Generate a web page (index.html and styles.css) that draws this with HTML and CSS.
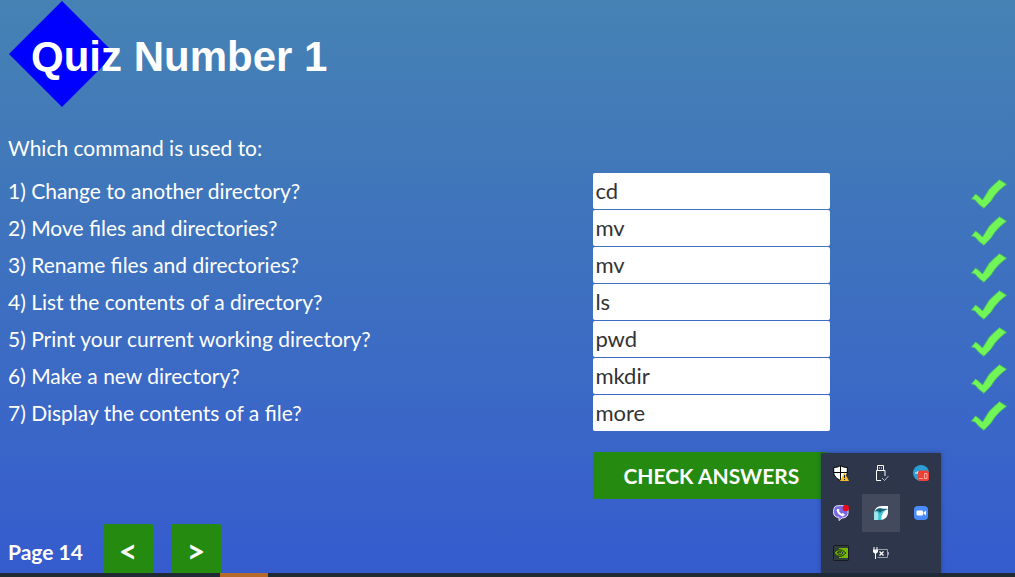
FILE: index.html
```html
<!DOCTYPE html>
<html lang="en">
<head>
<meta charset="utf-8">
<meta name="viewport" content="width=device-width, initial-scale=1">
<title>Quiz Number 1</title>
<link rel="stylesheet" href="styles.css">
</head>
<body>
<svg class="defs" aria-hidden="true">
  <symbol id="tick" viewBox="0 0 36 30">
    <path d="M.5 20 4.500 15 8 17.500 11.500 21 14 17 18 10.500 23 5.500 28.500 .7 35.500 5.200 28.500 11 24 16 20 22 13 29.300 8 25.500 4 21Z" fill="#72f557" stroke="#4bb968" stroke-width="1" stroke-linejoin="round"/>
  </symbol>
</svg>
<main class="page">
  <header class="header">
    <svg class="diamond" viewBox="0 0 106 106" aria-hidden="true"><path d="M53 0 106 53 53 106 0 53Z" fill="#0000ff"/></svg>
    <h1 class="title">Quiz Number 1</h1>
  </header>
  <form class="quiz">
    <p class="prompt">Which command is used to:</p>
    <div class="row"><label class="question" for="q1">1) Change to another directory?</label><input class="answer" id="q1" type="text" value="cd"><svg class="tick"><use href="#tick"/></svg></div>
    <div class="row"><label class="question" for="q2">2) Move files and directories?</label><input class="answer" id="q2" type="text" value="mv"><svg class="tick"><use href="#tick"/></svg></div>
    <div class="row"><label class="question" for="q3">3) Rename files and directories?</label><input class="answer" id="q3" type="text" value="mv"><svg class="tick"><use href="#tick"/></svg></div>
    <div class="row"><label class="question" for="q4">4) List the contents of a directory?</label><input class="answer" id="q4" type="text" value="ls"><svg class="tick"><use href="#tick"/></svg></div>
    <div class="row"><label class="question" for="q5">5) Print your current working directory?</label><input class="answer" id="q5" type="text" value="pwd"><svg class="tick"><use href="#tick"/></svg></div>
    <div class="row"><label class="question" for="q6">6) Make a new directory?</label><input class="answer" id="q6" type="text" value="mkdir"><svg class="tick"><use href="#tick"/></svg></div>
    <div class="row"><label class="question" for="q7">7) Display the contents of a file?</label><input class="answer" id="q7" type="text" value="more"><svg class="tick"><use href="#tick"/></svg></div>
    <div class="actions"><button class="button check" type="button">CHECK ANSWERS</button></div>
  </form>
  <nav class="pager">
    <span class="page-number">Page 14</span>
    <button class="button step" type="button">&lt;</button>
    <button class="button step" type="button">&gt;</button>
  </nav>
</main>
<footer class="taskbar"><span class="task"></span></footer>
<aside class="tray">
  <button class="tray-item" type="button" aria-label="Security">
    <svg viewBox="0 0 16 16"><path d="M7.500 .5C5.500 2 3 2.500 .7 2.500V7c0 4 3 6.500 6.800 8.500C11.300 13.500 14.300 11 14.300 7V2.500C12 2.500 9.500 2 7.500 .5Z" fill="#fff" stroke="#000"/><path d="M7.500 1V15M1 7.500H14" stroke="#000"/><path d="M11.500 7.500 16 16H7Z" fill="#f8b92c"/><path d="M11.500 10v3M11.500 14v1" stroke="#222" stroke-width="1"/></svg>
  </button>
  <button class="tray-item" type="button" aria-label="Eject device">
    <svg viewBox="0 0 16 16"><path d="M4.500 5V.5h6V5M8 15.500H3.500V5.500h8.500V11" fill="none" stroke="#fff"/><path d="M6 3h1M8 3h1" stroke="#fff"/><path d="m9 13 2.500 2.500 4-4.500" fill="none" stroke="#b9bdc8"/></svg>
  </button>
  <button class="tray-item" type="button" aria-label="Messages">
    <svg viewBox="0 0 16 16"><circle cx="8" cy="8" r="8" fill="#2b9fd4"/><path d="M2 8h3M4 7h2" stroke="#fff"/><rect x="5" y="5.500" width="11" height="10.500" rx="2.500" fill="#ee4036"/><path d="M6 13.500h4M11.500 8.500h2.500v5h-2.500Z" fill="none" stroke="#ffc0b8" stroke-width=".8"/></svg>
  </button>
  <button class="tray-item" type="button" aria-label="Call">
    <svg viewBox="0 0 16 16"><path d="M3 1Q7.500 0 12 1q2.500 1 3 4 .6 4-1 6-1.500 2-5 2l-3 2.500v-3Q2.500 12.500 1 10 0 7 1 3.500 1.500 1.500 3 1Z" fill="#7868e6" stroke="#e5e1ff" stroke-width="1"/><path d="M5 3.500 3.500 5Q4.500 9.500 9.500 11.500L12 10 10 8 8.500 8.800Q6.500 7.500 6 6L6.700 5Z" fill="#fff"/><circle cx="12.800" cy="3" r="3.200" fill="#e90d1c"/></svg>
  </button>
  <button class="tray-item active" type="button" aria-label="Bird">
    <svg viewBox="0 0 16 16"><path d="M1 15V8Q2 1 9 1h6v7q-1 7-8 7Z" fill="#fff"/><path d="M1 10Q1 5 5 3.500 9 2 12 4.500L15 4Q11 6 10 8 8 11 8.500 15H1Z" fill="#3dc3d4"/><path d="M2 7q2-1 3 1 1 3 0 7H1V8Z" fill="#9fe6eb"/><path d="M2 6Q5 2 9 4 12 3.500 15 4L9 6 7 8Q5 5 2 6Z" fill="#225d70"/></svg>
  </button>
  <button class="tray-item" type="button" aria-label="Video meeting">
    <svg viewBox="0 0 16 16"><rect x="1" y="1" width="14" height="14" rx="4" fill="#4a8cff"/><rect x="3.500" y="5.500" width="6.500" height="5" rx="1" fill="#fff"/><path d="m10.500 7.500 2.500-2v5l-2.500-2Z" fill="#fff"/></svg>
  </button>
  <button class="tray-item" type="button" aria-label="Graphics">
    <svg viewBox="0 0 16 16"><rect x=".5" y=".5" width="15" height="15" rx="1" fill="#303d38" stroke="#151b20"/><path d="M6 3h9v10H6Z" fill="#76b900"/><path d="M1 8q5-7 12 0-6 7-12 0Z" fill="#67a60c" stroke="#263b20"/><path d="M4 8q3-4 6 0-3 4-5 0 2-2 3 0" fill="none" stroke="#26391c"/></svg>
  </button>
  <button class="tray-item" type="button" aria-label="Battery">
    <svg viewBox="0 0 16 16"><path d="M5 4.500h9.500v8H4.500M15.500 7v3" fill="none" stroke="#9a9faa"/><path d="M1 2v3M4 2v3M2.500 8v6" stroke="#fff"/><path d="M0 4.500h5V7L3.500 8.500h-2L0 7Z" fill="#fff"/><path d="m6.500 6.500 4 4m0-4-4 4" stroke="#fff" stroke-width="1.300"/></svg>
  </button>
</aside>
</body>
</html>
```
FILE: styles.css
```css
* {
  box-sizing: border-box;
}

body {
  display: flex;
  flex-direction: column;
  min-height: 100vh;
  margin: 0;
  position: relative;
  background: linear-gradient(#4682b4, #4077ba 30%, #3a66c8 75%, #355bce);
  color: #fff;
  font: 21px/28px Lato, sans-serif;
}

.defs {
  position: absolute;
  width: 0;
  height: 0;
}

.page {
  flex: 1;
  display: flex;
  flex-direction: column;
  padding: 1px 8px 0;
}

.header {
  display: grid;
  align-items: center;
}

.diamond,
.title {
  grid-area: 1 / 1;
}

.diamond {
  width: 106px;
  height: 106px;
  margin-left: 1px;
}

.title {
  z-index: 1;
  margin: 0;
  padding: 6px 0 0 23px;
  font: bold 42px/48px "Liberation Sans", Arial, sans-serif;
}

.quiz {
  padding-top: 27px;
}

.prompt {
  margin: 0 0 11px;
}

.row {
  display: flex;
  height: 37px;
}

.question {
  flex: 0 0 58.6%;
  line-height: 36px;
}

.answer {
  width: 237px;
  height: 36px;
  padding: 0 2px 2px;
  border: 0;
  border-radius: 2px;
  background: #fff;
  color: #333;
  font-family: inherit;
  font-size: 22px;
}

.tick {
  width: 36px;
  height: 30px;
  margin: 6px 0 0 auto;
}

.actions {
  padding: 20px 0 0 58.6%;
}

.button {
  border: 0;
  border-radius: 2px;
  background: #248a10;
  color: #fff;
  font: bold 21px/28px Lato, sans-serif;
  white-space: nowrap;
}

.check {
  height: 47px;
  padding: 0 30px;
}

.pager {
  display: flex;
  align-items: stretch;
  gap: 18px;
  height: 49px;
  margin-top: auto;
}

.page-number {
  width: 77px;
  font-weight: bold;
  line-height: 55px;
  white-space: nowrap;
}

.step {
  width: 50px;
  padding: 4px 0 0;
  border-radius: 2px 2px 0 0;
  font-size: 32px;
}

.taskbar {
  height: 4px;
  padding-left: 220px;
  background: #202a33;
}

.task {
  display: block;
  width: 48px;
  height: 4px;
  background: #b5692b;
}

.tray {
  position: absolute;
  right: 74px;
  bottom: 4px;
  display: grid;
  grid-template-columns: repeat(3, 38px);
  grid-auto-rows: 38px;
  gap: 2px;
  padding: 1px;
  background: #2d364b;
  box-shadow: 0 0 4px #1d316699;
}

.tray-item {
  display: grid;
  place-items: center;
  padding: 0;
  border: 0;
  background: none;
}

.tray-item svg {
  width: 16px;
  height: 16px;
}

.active {
  background: #434a5d;
}
```
